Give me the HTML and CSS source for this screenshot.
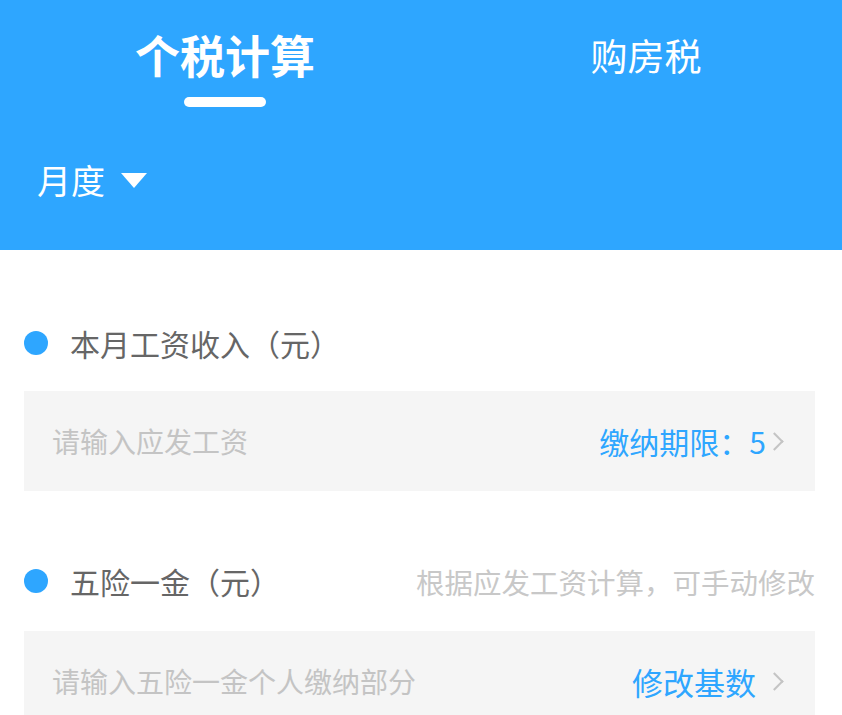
FILE: index.html
```html
<!DOCTYPE html>
<html>
	<head>
		<meta charset="utf-8">
		<title>个税计算</title>
		<link rel="stylesheet" href="styles.css">
	</head>
	<body>
	<header class="top">
		<nav class="tabs">
			<div class="tab active">个税计算<span class="bar"></span></div>
			<div class="tab">购房税</div>
		</nav>
		<div class="period">月度 <span class="caret"></span></div>
	</header>
	<main class="form">
		<section class="field">
			<div class="field-head">
				<span class="dot"></span>
				<span class="label">本月工资收入（元）</span>
			</div>
			<div class="field-box">
				<span class="placeholder">请输入应发工资</span>
				<span class="action">缴纳期限：5<span class="chev tight"></span></span>
			</div>
		</section>
		<section class="field">
			<div class="field-head">
				<span class="dot"></span>
				<span class="label">五险一金（元）</span>
				<span class="hint">根据应发工资计算，可手动修改</span>
			</div>
			<div class="field-box">
				<span class="placeholder">请输入五险一金个人缴纳部分</span>
				<span class="action big">修改基数<span class="chev"></span></span>
			</div>
		</section>
	</main>
	</body>
</html>
```

FILE: styles.css
```css
body {
	margin: 0;
	font-family: "Noto Sans CJK SC", "Noto Sans", sans-serif;
	background: #fff;
	overflow: hidden;
}
.top {
	background-color: #2ea6ff;
	height: 250px;
	color: #fff;
}
.tabs {
	display: grid;
	grid-template-columns: 450px 1fr;
	padding-top: 28px;
}
.tab {
	display: flex;
	flex-direction: column;
	align-items: center;
	font-size: 37px;
	line-height: 54px;
}
.tab.active {
	font-size: 45px;
	font-weight: bold;
}
.tab .bar {
	display: block;
	width: 82px;
	height: 10px;
	margin-top: 15px;
	border-radius: 5px;
	background: #fff;
}
.period {
	margin-top: 53px;
	padding-left: 37px;
	font-size: 34px;
	line-height: 40px;
	display: flex;
	align-items: center;
}
.caret {
	display: inline-block;
	margin-left: 16px;
	border-left: 13px solid transparent;
	border-right: 13px solid transparent;
	border-top: 15px solid #fff;
}
.form {
	padding: 73px 27px 0 24px;
}
.field + .field {
	margin-top: 70px;
}
.field-head {
	display: flex;
	align-items: center;
	height: 40px;
	margin-bottom: 28px;
}
.field + .field .field-head {
	margin-bottom: 30px;
}
.dot {
	width: 24px;
	height: 24px;
	border-radius: 50%;
	background: #2ea6ff;
	margin-right: 22px;
}
.label {
	font-size: 30px;
	color: #666;
}
.hint {
	margin-left: auto;
	font-size: 28.5px;
	color: #c8c8c8;
}
.field-box {
	background: #f5f5f5;
	height: 100px;
	display: flex;
	align-items: center;
	padding: 0 28px;
}
.placeholder {
	font-size: 28px;
	color: #c4c4c4;
}
.action {
	margin-left: auto;
	display: flex;
	align-items: center;
	font-size: 30px;
	color: #2ea6ff;
}
.action.big {
	font-size: 31px;
}
.chev {
	display: inline-block;
	width: 11px;
	height: 11px;
	border-top: 2px solid #c4c4c4;
	border-right: 2px solid #c4c4c4;
	transform: rotate(45deg);
	margin-left: 12px;
	margin-right: 6px;
}
.chev.tight {
	margin-left: 2px;
}
```
